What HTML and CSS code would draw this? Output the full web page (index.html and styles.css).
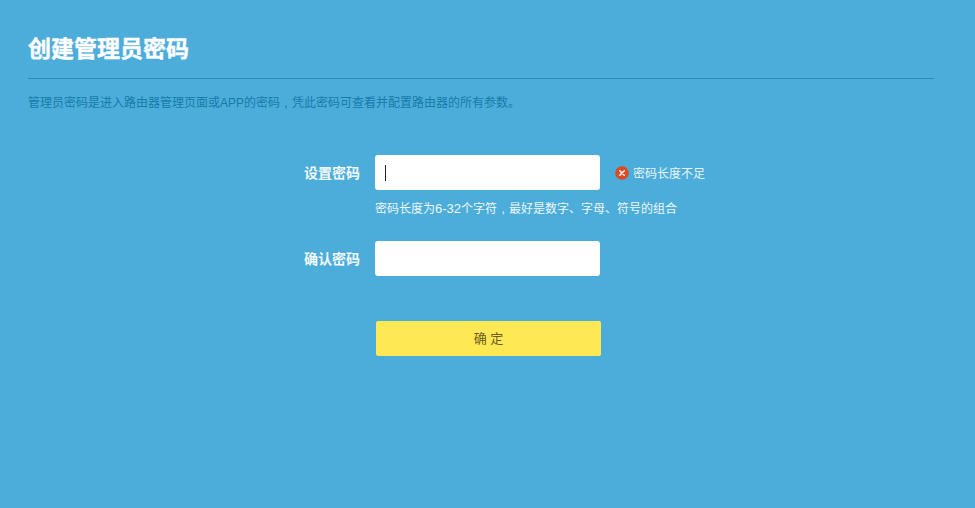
FILE: index.html
```html
<!DOCTYPE html>
<html lang="zh-CN">
<head>
<meta charset="utf-8">
<title>创建管理员密码</title>
<link rel="stylesheet" href="styles.css">
</head>
<body>
<main class="page">
  <header class="head">
    <h1 class="title">创建管理员密码</h1>
  </header>
  <p class="desc">管理员密码是进入路由器管理页面或APP的密码<span class="comma">,</span>凭此密码可查看并配置路由器的所有参数。</p>
  <form class="form">
    <div class="row">
      <label class="label">设置密码</label>
      <div class="field"><span class="caret"></span></div>
      <div class="error">
        <svg class="err-icon" viewBox="0 0 14 14" aria-hidden="true">
          <circle cx="7" cy="7" r="6.8" fill="#dd4a24"/>
          <path d="M4.8 4.8 9.2 9.2M9.2 4.8 4.8 9.2" stroke="#fff" stroke-width="1.5" stroke-linecap="round"/>
        </svg>
        <span>密码长度不足</span>
      </div>
    </div>
    <p class="hint">密码长度为<span class="num">6-32</span>个字符<span class="comma">,</span>最好是数字、字母、符号的组合</p>
    <div class="row row-second">
      <label class="label">确认密码</label>
      <div class="field"></div>
    </div>
    <button class="submit" type="button">确 定</button>
  </form>
</main>
</body>
</html>
```

FILE: styles.css
```css
* { box-sizing: border-box; }
html, body { margin: 0; height: 100%; }
body {
  background: #4cadda;
  color: #fff;
  font-family: "Liberation Sans", "Noto Sans CJK SC", sans-serif;
  overflow: hidden;
}
.page { padding: 35px 41px 0 28px; }
.head { border-bottom: 1px solid #2a8cbb; height: 44px; }
.title { margin: 0; font-size: 23px; line-height: 29px; font-weight: 700; color: #fff; -webkit-text-stroke: 0.4px #fff; }
.desc { margin: 16px 0 0; font-size: 12px; line-height: 16px; color: #167ba9; }
.comma { display: inline-block; width: 12px; text-align: center; }
.num { font-size: 13px; }
.form { margin: 44px 0 0; padding-left: 275px; }
.row { display: flex; align-items: center; height: 35px; }
.row-second { margin-top: 24px; }
.label { width: 57px; padding-bottom: 2px; text-align: right; white-space: nowrap; font-size: 14px; font-weight: 700; color: #f2f9fc; }
.field {
  width: 225px; height: 35px; margin-left: 15px;
  background: #fff; border-radius: 3px;
  display: flex; align-items: center; padding-left: 10px;
}
.caret { width: 1px; height: 16px; background: #222; }
.error { display: flex; align-items: center; margin-left: 15px; font-size: 12px; color: #e8f5fb; }
.err-icon { width: 14px; height: 14px; margin-right: 4px; }
.hint { margin: 11px 0 0 72px; font-size: 12px; line-height: 16px; color: #eef8fc; }
.submit {
  display: block; width: 225px; height: 35px; margin: 45px 0 0 73px; padding: 0 0 2px;
  background: #fee853; border: 0; border-radius: 2px;
  font: inherit; font-size: 13px; color: #6a5a22;
}
```
